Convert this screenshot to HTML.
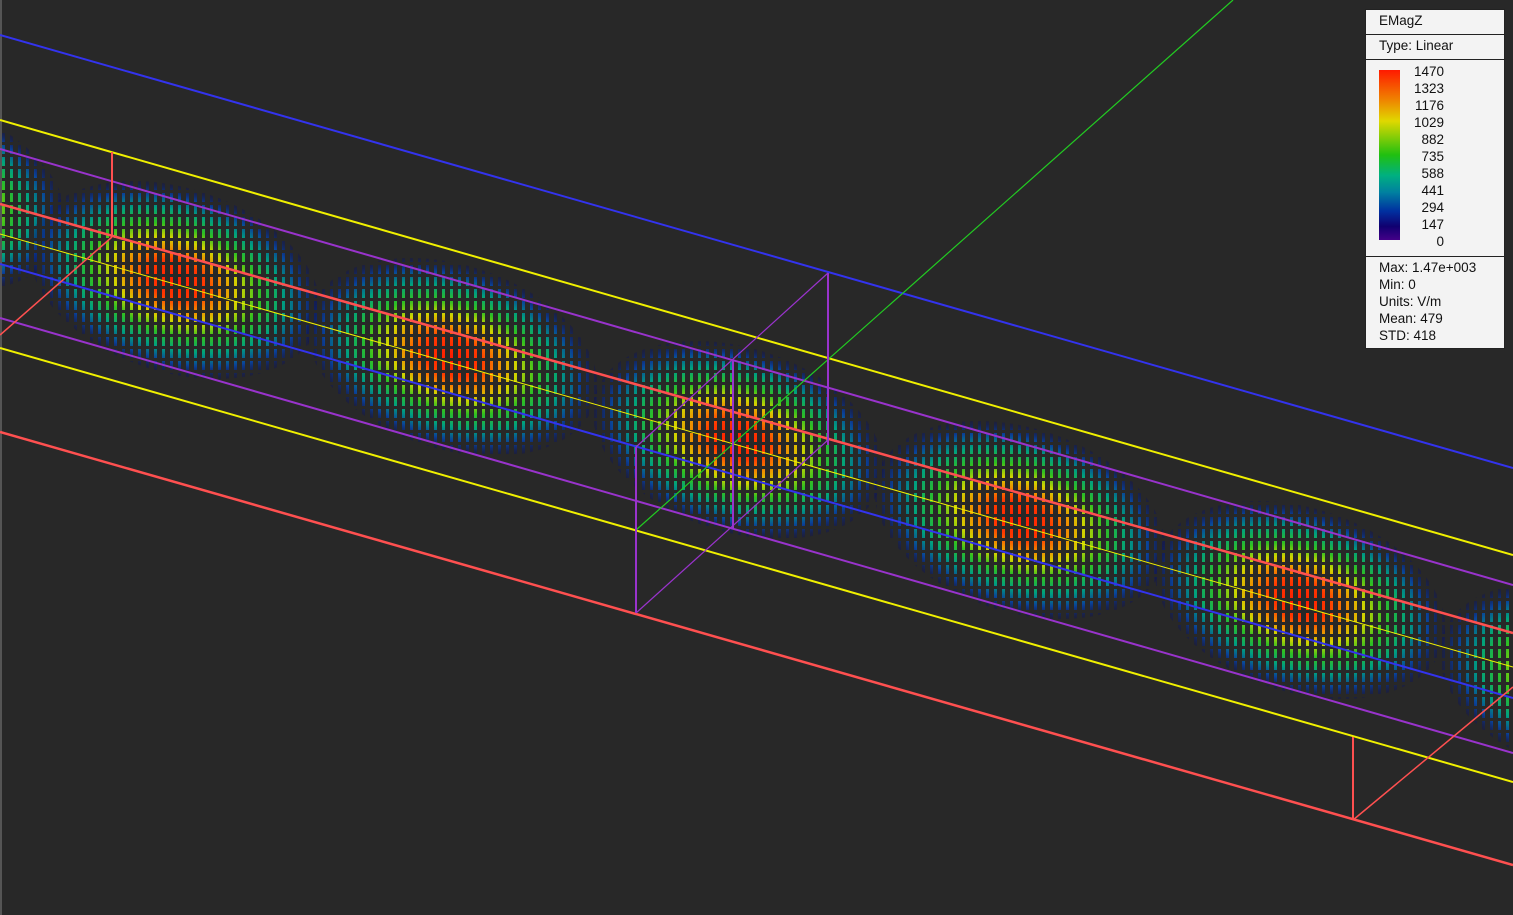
<!DOCTYPE html>
<html><head><meta charset="utf-8"><style>
html,body{margin:0;padding:0;background:#282828;overflow:hidden}
body{width:1513px;height:915px;position:relative;font-family:"Liberation Sans",sans-serif}
#leg{position:absolute;left:1365px;top:9px;width:138px;height:338px;background:#f3f3f3;border:1px solid #222;font-size:13.5px;color:#111}
.r{position:absolute;left:0;right:0;border-bottom:1px solid #222}
.lab{position:absolute;right:60px;text-align:right;line-height:17px}
</style></head><body>
<svg width="1513" height="915" style="position:absolute;left:0;top:0">
<defs>
<radialGradient id="g">
<stop offset="0" stop-color="#ff1a00"/>
<stop offset="0.2" stop-color="#ff3800"/>
<stop offset="0.32" stop-color="#f08a00"/>
<stop offset="0.44" stop-color="#d0d400"/>
<stop offset="0.58" stop-color="#30c020"/>
<stop offset="0.74" stop-color="#00a080"/>
<stop offset="0.88" stop-color="#0a4098"/>
<stop offset="1" stop-color="#0a1060" stop-opacity="0.3"/>
</radialGradient>
<pattern id="p" width="8" height="12" patternUnits="userSpaceOnUse">
<rect x="2" y="1" width="3" height="9" fill="#fff"/>
</pattern>
<mask id="m"><rect width="1513" height="915" fill="url(#p)"/></mask>
</defs>
<rect x="0" y="0" width="2" height="915" fill="#555"/>
<g mask="url(#m)">
<g fill="url(#g)">
<ellipse cx="-70" cy="195" rx="140" ry="90" transform="rotate(18 -70 195)"/>
<ellipse cx="175" cy="280" rx="150" ry="92" transform="rotate(18 175 280)"/>
<ellipse cx="452" cy="357" rx="150" ry="92" transform="rotate(18 452 357)"/>
<ellipse cx="738" cy="440" rx="150" ry="92" transform="rotate(18 738 440)"/>
<ellipse cx="1020" cy="520" rx="150" ry="92" transform="rotate(18 1020 520)"/>
<ellipse cx="1300" cy="600" rx="150" ry="92" transform="rotate(18 1300 600)"/>
<ellipse cx="1585" cy="682" rx="150" ry="92" transform="rotate(18 1585 682)"/>
</g>
</g>
<g fill="none" stroke-width="2">
<line x1="0" y1="35" x2="1513" y2="468" stroke="#3333ee"/>
<line x1="0" y1="120" x2="1513" y2="555" stroke="#f0f000"/>
<line x1="0" y1="149" x2="1513" y2="585" stroke="#9933cc"/>
<line x1="0" y1="204" x2="1513" y2="633" stroke="#ff5050" stroke-width="2.5"/>
<line x1="0" y1="234" x2="1513" y2="667" stroke="#f0f000" stroke-width="1"/>
<line x1="0" y1="264" x2="1513" y2="698" stroke="#3333ee"/>
<line x1="0" y1="318" x2="1513" y2="753" stroke="#9933cc"/>
<line x1="0" y1="348" x2="1513" y2="782" stroke="#f0f000"/>
<line x1="0" y1="432" x2="1513" y2="865" stroke="#ff5050" stroke-width="2.5"/>
<line x1="112" y1="152" x2="112" y2="237" stroke="#ff5050"/>
<line x1="0" y1="335" x2="112" y2="237" stroke="#ff5050" stroke-width="1.5"/>
<line x1="1353" y1="737" x2="1353" y2="820" stroke="#ff5050"/>
<line x1="1353" y1="820" x2="1513" y2="687" stroke="#ff5050" stroke-width="1.5"/>
<line x1="636" y1="530" x2="1233" y2="0" stroke="#22cc22" stroke-width="1.2"/>
<line x1="636" y1="447" x2="636" y2="613" stroke="#9933cc"/>
<line x1="828" y1="273" x2="828" y2="445" stroke="#9933cc"/>
<line x1="733" y1="360" x2="733" y2="528" stroke="#9933cc"/>
<line x1="636" y1="447" x2="828" y2="273" stroke="#9933cc" stroke-width="1.2"/>
<line x1="636" y1="613" x2="828" y2="440" stroke="#9933cc" stroke-width="1.2"/>
</g>
</svg>
<div id="leg">
<div class="r" style="top:0;height:24px"><span style="position:absolute;left:13px;top:3px">EMagZ</span></div>
<div class="r" style="top:24px;height:25px"><span style="position:absolute;left:13px;top:4px">Type: Linear</span></div>
<div class="r" style="top:49px;height:197px">
<div style="position:absolute;left:13px;top:11px;width:21px;height:170px;background:linear-gradient(#ff1a00,#f08000 17%,#e0d800 30%,#20c010 50%,#00b080 62%,#0080a0 72%,#0030a0 83%,#100070 92%,#440088)"></div>
<div class="lab" style="top:4px">1470<br>1323<br>1176<br>1029<br>882<br>735<br>588<br>441<br>294<br>147<br>0</div>
</div>
<div style="position:absolute;left:13px;top:249px;line-height:17px">Max: 1.47e+003<br>Min: 0<br>Units: V/m<br>Mean: 479<br>STD: 418</div>
</div>
</body></html>
